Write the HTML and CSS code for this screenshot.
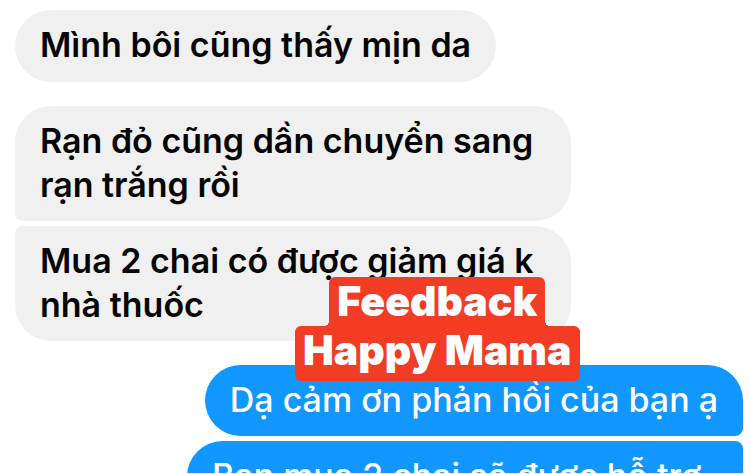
FILE: index.html
```html
<!DOCTYPE html>
<html lang="vi">
  <head>
    <meta charset="UTF-8" />
    <meta name="viewport" content="width=device-width, initial-scale=1.0" />
    <title>Feedback Happy Mama</title>

    <link rel="stylesheet" href="styles.css">
  </head>

  <body>
    <main class="chat">
      <!-- Customer -->
      <p class="message received">Mình bôi cũng thấy mịn da</p>

      <div class="group">
        <p class="message received wide first">Rạn đỏ cũng dần chuyển sang<br />rạn trắng rồi</p>
        <p class="message received wide last">Mua 2 chai có được giảm giá k<br />nhà thuốc</p>
      </div>

      <!-- Shop -->
      <div class="group">
        <p class="message sent first">Dạ cảm ơn phản hồi của bạn ạ</p>
        <p class="message sent wide">Bạn mua 2 chai sẽ được hỗ trợ</p>
      </div>

      <h1 class="sticker">
        <span class="sticker-top">Feedback</span>
        <span class="sticker-bottom">Happy Mama</span>
      </h1>
    </main>
  </body>
</html>
```

FILE: styles.css
```css
* {
  box-sizing: border-box;
  margin: 0;
  padding: 0;
}

body {
  background-color: white;
  font-family: Inter, "Liberation Sans", sans-serif;
}

.chat {
  position: relative;
  display: flex;
  flex-direction: column;
  gap: 24px;
  height: calc(100vh - 1px);
  padding: 10px 7px 0 15px;
  overflow: hidden;
}

.group {
  display: flex;
  flex-direction: column;
  gap: 5px;
}

.message {
  flex-shrink: 0;
  padding: 13px 25px 15px;
  border-radius: 36px;
  font-size: 34px;
  line-height: 44px;
  white-space: nowrap;
}

.wide {
  width: 556px;
}

.received {
  align-self: flex-start;
  background-color: #f0f0f0;
  color: #050505;
  font-weight: 600;
}

.group .received {
  padding-bottom: 14px;
}

.received.first {
  border-bottom-left-radius: 8px;
}

.received.last {
  border-top-left-radius: 8px;
}

.sent {
  align-self: flex-end;
  padding-bottom: 14px;
  background-color: #1296ff;
  color: white;
  font-weight: 500;
  border-top-right-radius: 8px;
  border-bottom-right-radius: 8px;
}

.sent.first {
  border-top-right-radius: 36px;
}

/* red label over the chat */
.sticker {
  position: absolute;
  top: 277px;
  left: 295px;
  display: flex;
  flex-direction: column;
  align-items: center;
  color: white;
  font-size: 41px;
  font-weight: 900;
  line-height: 49px;
}

.sticker span {
  position: relative;
  padding: 0 8px;
  background-color: #f23c26;
  border-radius: 6px;
}

.sticker .sticker-top {
  border-radius: 6px 6px 0 0;
}

.sticker .sticker-bottom {
  padding-bottom: 6px;
}

/* inner corners where the two lines meet */
.sticker-top::before,
.sticker-top::after {
  content: "";
  position: absolute;
  bottom: 0;
  width: 5px;
  height: 5px;
}

.sticker-top::before {
  right: 100%;
  background: radial-gradient(circle at 0 0, transparent 5px, #f23c26 5px);
}

.sticker-top::after {
  left: 100%;
  background: radial-gradient(circle at 100% 0, transparent 5px, #f23c26 5px);
}
```
